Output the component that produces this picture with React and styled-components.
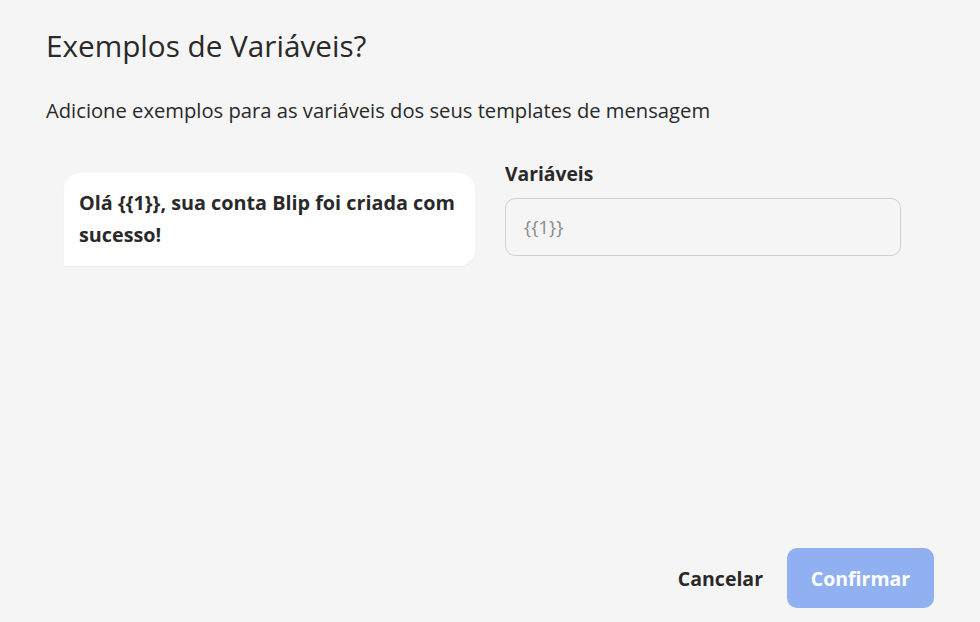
import styled, { createGlobalStyle } from 'styled-components'

const Global = createGlobalStyle`
  html, body { margin: 0; padding: 0; background: #f5f5f5; }
  body { font-family: 'Open Sans', 'Noto Sans', sans-serif; color: #292929; }
`

export default function App() {
  return (
    <>
      <Global />
      <Modal>
        <Title>Exemplos de Variáveis?</Title>
        <Subtitle>Adicione exemplos para as variáveis dos seus templates de mensagem</Subtitle>
        <Content>
          <Bubble>Olá {'{{1}}'}, sua conta Blip foi criada com sucesso!</Bubble>
          <Fields>
            <Label>Variáveis</Label>
            <Input placeholder="{{1}}" />
          </Fields>
        </Content>
        <Footer>
          <GhostButton>Cancelar</GhostButton>
          <PrimaryButton disabled>Confirmar</PrimaryButton>
        </Footer>
      </Modal>
    </>
  )
}

const Modal = styled.div`
  width: 980px;
  height: 622px;
  box-sizing: border-box;
  padding: 26px 46px 14px 46px;
  display: flex;
  flex-direction: column;
`

const Title = styled.h1`
  margin: 0;
  font-size: 29.7px;
  font-weight: 400;
  line-height: 40px;
  color: #292929;
`

const Subtitle = styled.p`
  margin: 30px 0 0;
  font-size: 20.2px;
  line-height: 28px;
  color: #292929;
`

const Content = styled.div`
  display: grid;
  grid-template-columns: 411px 396px;
  column-gap: 30px;
  margin: 39px 0 0 18px;
  align-items: start;
`

const Bubble = styled.div`
  margin-top: 10px;
  background: #ffffff;
  border-radius: 16px 16px 16px 0;
  padding: 14px 15px 15px;
  font-size: 19.8px;
  font-weight: 700;
  line-height: 32px;
  color: #292929;
  box-shadow: 0 1px 2px rgba(0, 0, 0, 0.04);
`

const Fields = styled.div`
  display: flex;
  flex-direction: column;
  gap: 13px;
`

const Label = styled.label`
  font-size: 19.3px;
  font-weight: 700;
  line-height: 22px;
  color: #292929;
`

const Input = styled.input`
  box-sizing: border-box;
  height: 58px;
  border: 1px solid #cfcfcf;
  border-radius: 10px;
  background: transparent;
  padding: 0 18px;
  font-family: inherit;
  font-size: 19px;
  color: #292929;
  outline: none;
  &::placeholder { color: #8c8c8c; }
`

const Footer = styled.div`
  margin-top: auto;
  display: flex;
  justify-content: flex-end;
  align-items: center;
  gap: 24px;
`

const GhostButton = styled.button`
  border: none;
  background: none;
  font-family: inherit;
  font-size: 19.5px;
  font-weight: 700;
  color: #292929;
  padding: 0;
  cursor: pointer;
`

const PrimaryButton = styled.button`
  width: 147px;
  height: 60px;
  border: none;
  border-radius: 10px;
  background: #90b0f2;
  color: #ffffff;
  font-family: inherit;
  font-size: 19.5px;
  font-weight: 700;
`
